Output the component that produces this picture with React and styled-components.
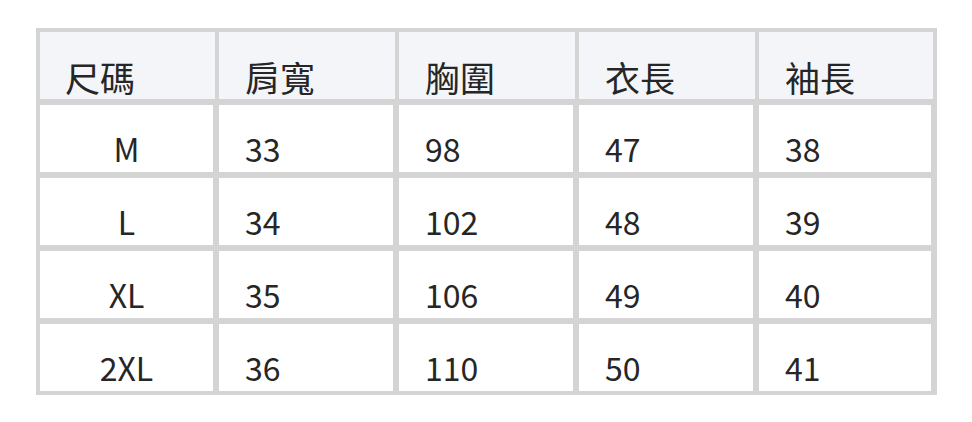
import React from 'react'
import styled, { createGlobalStyle } from 'styled-components'

const GlobalStyle = createGlobalStyle`
  body {
    margin: 0;
    background: #ffffff;
    font-family: "Noto Sans CJK TC", "Noto Sans", sans-serif;
  }
`

const Page = styled.div`
  width: 972px;
  height: 422px;
  padding: 28px 0 0 36px;
  box-sizing: border-box;
`

const Table = styled.div`
  width: 901px;
  box-sizing: border-box;
  padding: 4px;
  background: #d4d4d4;
  display: grid;
  row-gap: 6px;
`

const Row = styled.div`
  display: grid;
  grid-template-columns: 175px 176px 176px 176px 174px;
  column-gap: 4px;
  height: 67px;
`

const Cell = styled.div`
  display: flex;
  align-items: flex-end;
  justify-content: ${props => props.$center ? 'center' : 'flex-start'};
  padding: 0 0 ${props => props.$head ? '5px' : '8px'} ${props => props.$center ? '0' : '26px'};
  background: ${props => props.$head ? '#f4f5f9' : '#ffffff'};
  border-right: ${props => props.$head ? 'none' : '2px solid #d4d4d4'};
  color: #262626;
  font-size: ${props => props.$head ? '35px' : '32px'};
  line-height: 1;
  box-sizing: border-box;
`

const headers = ['尺碼', '肩寬', '胸圍', '衣長', '袖長']
const rows = [
  ['M', '33', '98', '47', '38'],
  ['L', '34', '102', '48', '39'],
  ['XL', '35', '106', '49', '40'],
  ['2XL', '36', '110', '50', '41']
]

export default function App () {
  return (
    <Page>
      <GlobalStyle />
      <Table>
        <Row>
          {headers.map((h, i) => (
            <Cell key={h} $head style={i === 0 ? { paddingLeft: 25 } : undefined}>{h}</Cell>
          ))}
        </Row>
        {rows.map(r => (
          <Row key={r[0]}>
            {r.map((v, i) => (
              <Cell key={i} $center={i === 0}>{v}</Cell>
            ))}
          </Row>
        ))}
      </Table>
    </Page>
  )
}
